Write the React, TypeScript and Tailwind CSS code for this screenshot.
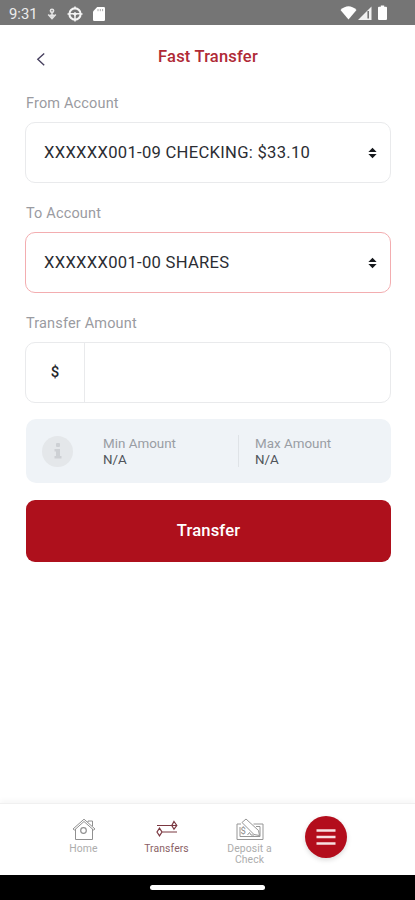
import type { ReactNode } from 'react';

interface AccountSelectProps {
  label: string;
  value: string;
  active?: boolean;
}

function StatusBar() {
  return (
    <div className="flex h-[25px] shrink-0 items-center bg-[#757575] pl-[9px] pr-[28px] text-white">
      <span className="w-[28px] pt-[3px] text-[14.8px] leading-none text-[#ececec]">9:31</span>
      <svg className="ml-[10px] mt-[2px]" width="10" height="12" viewBox="0 0 10 12" fill="none" stroke="#e4e4e4">
        <circle cx="5" cy="2.8" r="1.6" strokeWidth="1.6" />
        <path d="M5 4.5V10M1.2 6.5L5 10.6L8.8 6.5M2.8 7.2H7.2" strokeWidth="1.5" />
      </svg>
      <svg className="ml-[10px] mt-[2px]" width="16" height="16" viewBox="0 0 16 16" fill="none" stroke="#f4f4f4">
        <circle cx="8" cy="8" r="5.6" strokeWidth="2.1" />
        <path d="M3 7.8H13M8 8V13M8 0.5V2.5M8 13.5V15.5M0.5 8H2.5M13.5 8H15.5" strokeWidth="1.5" />
        <circle cx="8" cy="8" r="1.3" fill="#f4f4f4" />
      </svg>
      <svg className="ml-[10px] mt-[2px]" width="12" height="14" viewBox="0 0 12 14">
        <path d="M4.2 0H10.8Q12 0 12 1.2V12.8Q12 14 10.8 14H1.2Q0 14 0 12.8V4.4Z" fill="#fff" />
        <path d="M5 2V4.2M7.3 2V4.2M9.6 2V4.2" stroke="#aaa" />
      </svg>
      <div className="ml-auto flex items-end">
        <svg className="mr-px" width="17" height="14" viewBox="0 0 17 14">
          <path d="M0.5 4Q8.5 -3.5 16.5 4L8.5 13.5Z" fill="#fff" />
        </svg>
        <svg width="14" height="14" viewBox="0 0 14 14">
          <path d="M0 14L13.5 0.5V14Z" fill="#f1f1f1" />
          <path d="M10.2 5V12.5" stroke="#757575" strokeWidth="1.6" />
        </svg>
        <svg className="ml-[6px]" width="9" height="15" viewBox="0 0 9 15">
          <path d="M2.8 0.4H6.2V1.8H8Q9 1.8 9 2.8V14Q9 15 8 15H1Q0 15 0 14V2.8Q0 1.8 1 1.8H2.8Z" fill="#fff" />
        </svg>
      </div>
    </div>
  );
}

function AccountSelect({ label, value, active }: AccountSelectProps) {
  return (
    <div className="mb-[21px]">
      <label className="ml-px block h-5 text-[14.5px] leading-5 tracking-[0.16px] text-[#9a9ba1]">{label}</label>
      <button
        className={`mt-[8px] flex h-[61px] w-full items-center justify-between rounded-[10px] border bg-white pl-[18px] pr-[13px] ${
          active ? 'border-[#f3adb0]' : 'border-[#e9eaec]'
        }`}
      >
        <span className="text-[16.6px] leading-5 tracking-[0.29px] text-[#2b2d33]">{value}</span>
        <svg width="9" height="12" viewBox="0 0 9 12" fill="#17191d">
          <path d="M4.5 0.7L8.6 5H0.4Z" />
          <path d="M4.5 11.3L8.6 7H0.4Z" />
        </svg>
      </button>
    </div>
  );
}

function AmountLimit({ label, value }: { label: string; value: string }) {
  return (
    <div className="pt-[2px] leading-4">
      <p className="text-[13.4px] text-[#999da4]">{label}</p>
      <p className="text-[13.4px] text-[#50545b]">{value}</p>
    </div>
  );
}

function NavItem({ label, active, children }: { label: string; active?: boolean; children: ReactNode }) {
  return (
    <button className="flex w-[83px] flex-col items-center">
      <span className="flex h-[24px] items-center justify-center">{children}</span>
      <span
        className={`mt-[2px] w-[54px] text-center text-[10.4px] leading-[11px] tracking-[0.1px] ${
          active ? 'text-[#8b5f66]' : 'text-[#adadad]'
        }`}
      >
        {label}
      </span>
    </button>
  );
}

function BottomNav() {
  return (
    <nav className="flex h-[72px] shrink-0 items-start border-t border-[#f0f0f0] bg-white pl-[42px] pt-[13px] shadow-[0_-3px_5px_rgba(0,0,0,0.035)]">
      <NavItem label="Home">
        <svg width="24" height="23" viewBox="0 0 24 23" fill="none" stroke="#909090" strokeWidth="1">
          <path d="M3.5 11V21.5H20.5V11M1 11L12 1.2L23 11L21.5 12L12 3.5L2.5 12Z" />
          <path d="M16 4.2V3H20.5V8" />
          <circle cx="11.5" cy="12.5" r="2.8" strokeWidth="1.2" />
        </svg>
      </NavItem>
      <NavItem label="Transfers" active>
        <svg width="24" height="18" viewBox="0 0 24 18" fill="none" stroke="#7b3841" strokeWidth="1.2">
          <path d="M2 5.5H21M19 1.5L21.8 5.5L19 9.2L16.8 5.5Z" />
          <path d="M22 12H7M4.5 8.2L7 12L4.5 15.8L2 12Z" />
        </svg>
      </NavItem>
      <NavItem label="Deposit a Check">
        <svg width="28" height="23" viewBox="0 0 28 23" fill="none" stroke="#969696" strokeWidth="1">
          <path d="M5 6H1V21.5H27V6H17.5M4 9V18.5H24V8.5H20" />
          <path d="M6 4.5L10 1L22.5 12.5L23.5 17.5L18 16.5Z" />
          <path d="M11.5 17L13.5 14.5L15 17H18" />
          <text x="4.5" y="16" fontSize="9.5" fill="#8d8d8d" stroke="none">$</text>
        </svg>
      </NavItem>
      <button className="-mt-[1px] ml-[14px] flex h-[42px] w-[42px] items-center justify-center rounded-full bg-[#b30d1c] shadow-[0_2px_5px_rgba(0,0,0,0.15)]">
        <svg width="20" height="18" viewBox="0 0 20 18" stroke="#f8dfe1" strokeWidth="2.5">
          <path d="M0.5 2.5H19.5M0.5 9H19.5M0.5 15.5H19.5" />
        </svg>
      </button>
    </nav>
  );
}

export default function App() {
  return (
    <div className="flex h-[900px] w-[415px] flex-col overflow-hidden bg-white font-['Roboto','Liberation_Sans',sans-serif]">
      <StatusBar />

      <header className="grid h-[69px] shrink-0 grid-cols-[60px_1fr_60px] items-start pt-[22px]">
        <button className="ml-[36px] mt-[5px]">
          <svg width="10" height="15" viewBox="0 0 10 15" fill="none" stroke="#47405f" strokeWidth="1.4">
            <path d="M8.2 1.4L1.8 7.3L8.2 13.2" />
          </svg>
        </button>
        <h1 className="pl-px text-center text-[16.5px] font-medium leading-5 tracking-[0.2px] text-[#b02a36]">Fast Transfer</h1>
      </header>

      <main className="flex flex-1 flex-col pl-[25px] pr-[24px]">
        <AccountSelect label="From Account" value="XXXXXX001-09 CHECKING: $33.10" />
        <AccountSelect label="To Account" value="XXXXXX001-00 SHARES" active />

        <label className="ml-px block h-5 text-[14.5px] leading-5 tracking-[0.16px] text-[#9a9ba1]">Transfer Amount</label>
        <div className="mt-[8px] flex h-[61px] shrink-0 overflow-hidden rounded-[10px] border border-[#e9eaec]">
          <span className="flex w-[59px] items-center justify-center border-r border-[#e9eaec] text-[15px] font-medium text-[#25272b]">
            $
          </span>
          <input aria-label="Transfer Amount" className="min-w-0 flex-1 px-4 outline-none" />
        </div>

        <section className="ml-px mt-[16px] flex h-[64px] items-center rounded-[10px] bg-[#eff3f7]">
          <div className="ml-[16px] flex h-[31px] w-[31px] items-center justify-center rounded-full bg-[#e4e7ea]">
            <svg width="10" height="18" viewBox="0 0 10 18" fill="#cdd0d4">
              <rect x="3" y="1" width="4" height="4" rx="1" />
              <path d="M1.5 7H7V14H8.5V16.5H1.5V14H3V9.5H1.5Z" />
            </svg>
          </div>
          <div className="ml-[30px] w-[135px]">
            <AmountLimit label="Min Amount" value="N/A" />
          </div>
          <div className="h-[32px] w-px bg-[#dfe3e7]" />
          <div className="ml-[16px]">
            <AmountLimit label="Max Amount" value="N/A" />
          </div>
        </section>

        <button className="ml-px mt-[17px] h-[62px] rounded-[9px] bg-[#ae101c] text-[16.6px] font-medium tracking-[0.15px] text-white">
          Transfer
        </button>
      </main>

      <BottomNav />

      <div className="flex h-[25px] shrink-0 justify-center bg-black pt-[10px]">
        <div className="h-[5px] w-[115px] rounded-full bg-white" />
      </div>
    </div>
  );
}
